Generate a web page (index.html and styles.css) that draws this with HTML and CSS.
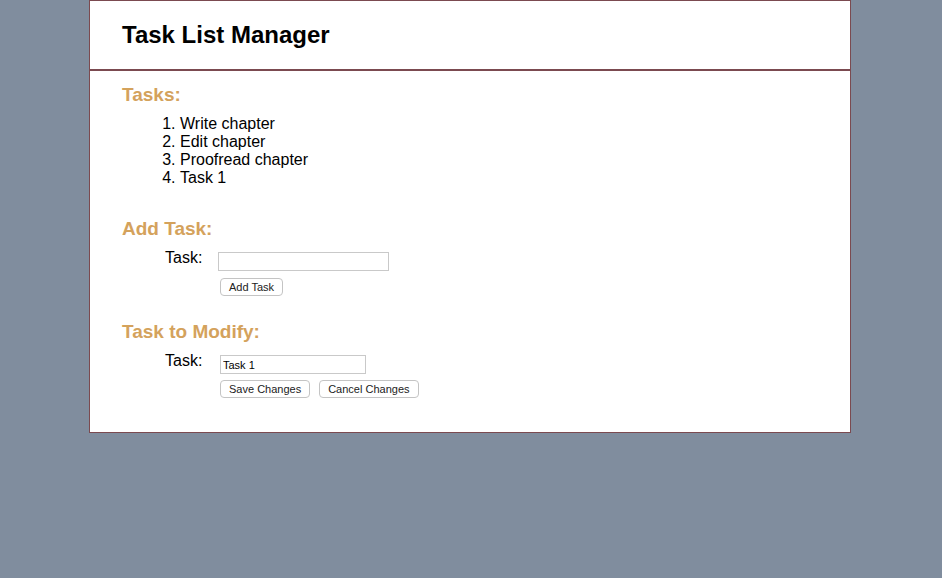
FILE: index.html
```html
<!DOCTYPE html>
<html>
<head>
<meta charset="utf-8">
<link rel="stylesheet" href="styles.css">
<title>Task List Manager</title>
</head>
<body>
<div class="page">
  <header class="header">
    <h1 class="title">Task List Manager</h1>
  </header>
  <main class="content">
    <h2 class="section-title first">Tasks:</h2>
    <ol class="task-list">
      <li>Write chapter</li>
      <li>Edit chapter</li>
      <li>Proofread chapter</li>
      <li>Task 1</li>
    </ol>

    <h2 class="section-title add">Add Task:</h2>
    <div class="form add-form">
      <label class="label">Task:</label>
      <input class="input input-add" type="text" value="">
      <div class="buttons">
        <button class="btn">Add Task</button>
      </div>
    </div>

    <h2 class="section-title modify">Task to Modify:</h2>
    <div class="form modify-form">
      <label class="label">Task:</label>
      <input class="input input-mod" type="text" value="Task 1">
      <div class="buttons">
        <button class="btn">Save Changes</button>
        <button class="btn">Cancel Changes</button>
      </div>
    </div>
  </main>
</div>
</body>
</html>
```

FILE: styles.css
```css
html, body {
  margin: 0;
  padding: 0;
}
body {
  background: #808d9e;
  font-family: "Liberation Sans", Arial, sans-serif;
  color: #000;
  width: 942px;
  height: 578px;
}
.page {
  margin-left: 89px;
  width: 760px;
  background: #fff;
  border: 1px solid #7b4a50;
}
.header {
  height: 68px;
  border-bottom: 2px solid #7b4a50;
  padding: 0 32px;
  display: flex;
  align-items: center;
}
.title {
  margin: 0;
  font-size: 24px;
  font-weight: bold;
  line-height: 28px;
}
.content {
  padding: 0 32px 34px 32px;
}
.section-title {
  margin: 0;
  color: #d4a25c;
  font-size: 19px;
  line-height: 22px;
  font-weight: bold;
}
.section-title.first { padding-top: 13px; }
.section-title.add { margin-top: 31px; }
.section-title.modify { margin-top: 25px; }
.task-list {
  margin: 9px 0 0 0;
  padding-left: 58px;
  font-size: 16px;
  line-height: 18px;
}
.form {
  display: grid;
  grid-template-columns: 96px auto;
  align-items: start;
}
.add-form { margin-top: 10px; }
.modify-form { margin-top: 10px; }
.label {
  font-size: 16px;
  padding-left: 43px;
  line-height: 16px;
}
.input {
  box-sizing: border-box;
  border: 1px solid #c9c9c9;
  background: #fff;
  font-family: "Liberation Sans", Arial, sans-serif;
  font-size: 11px;
  padding: 0 2px;
  outline: none;
  margin: 2px 0 0 0;
  justify-self: start;
}
.input-add {
  width: 171px;
  height: 19px;
}
.input-mod {
  width: 146px;
  height: 19px;
  margin-left: 2px;
}
.buttons {
  grid-column: 2;
  display: flex;
  gap: 9px;
  margin-top: 7px;
  padding-left: 2px;
}
.modify-form .buttons { margin-top: 6px; }
.btn {
  box-sizing: border-box;
  height: 18px;
  padding: 0 8px;
  background: #fff;
  border: 1px solid #c4c4c4;
  border-radius: 4px;
  font-family: "Liberation Sans", Arial, sans-serif;
  font-size: 11px;
  line-height: 16px;
  color: #222;
  margin: 0;
}
```
